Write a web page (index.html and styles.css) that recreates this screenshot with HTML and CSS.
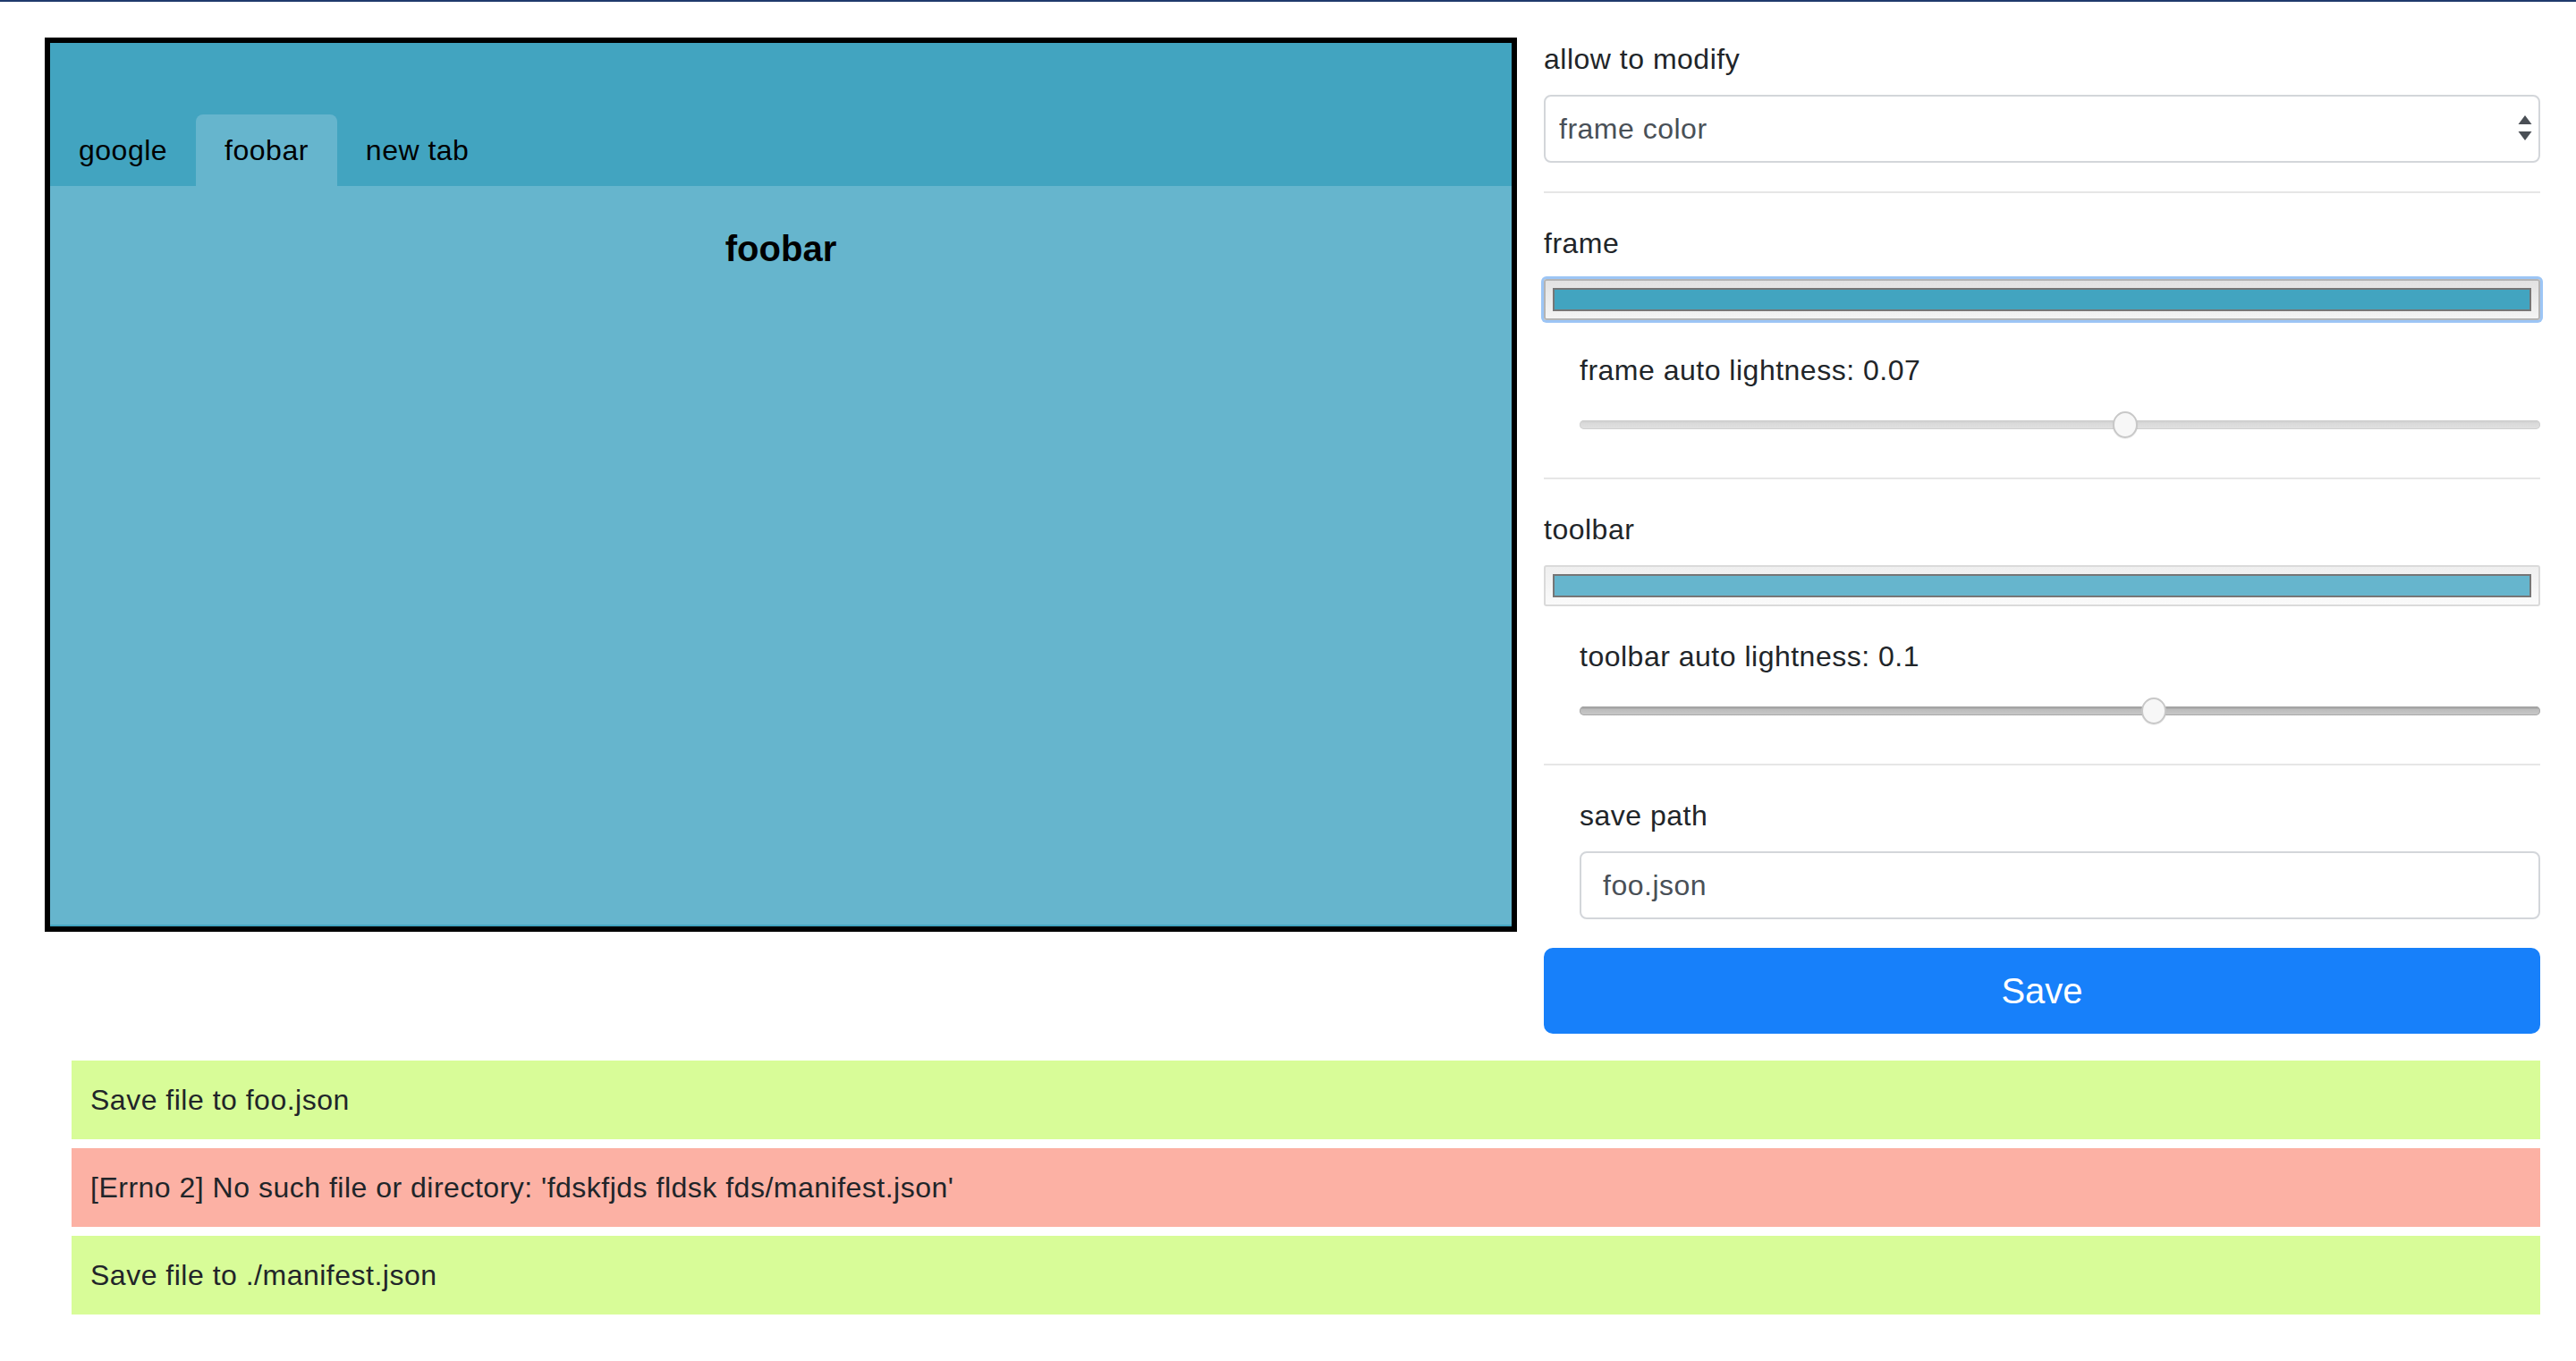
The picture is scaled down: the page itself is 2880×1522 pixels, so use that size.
FILE: index.html
```html
<!DOCTYPE html>
<html lang="en">
<head>
<meta charset="utf-8">
<title>Theme editor</title>
<link rel="stylesheet" href="styles.css">
</head>
<body>
<div class="main">
  <section class="preview">
    <nav class="tabs">
      <span class="tab">google</span>
      <span class="tab active">foobar</span>
      <span class="tab">new tab</span>
    </nav>
    <div class="viewport">
      <h5 class="page-title">foobar</h5>
    </div>
  </section>

  <form class="controls">
    <div class="group">
      <label class="label" for="modify">allow to modify</label>
      <div class="select-wrap">
        <select id="modify" class="select">
          <option>frame color</option>
        </select>
        <svg class="select-arrows" width="16" height="30" viewBox="0 0 16 30" aria-hidden="true">
          <path d="M8 0 L15.5 10 L0.5 10 Z" fill="#4a4f55"/>
          <path d="M0.5 18 L15.5 18 L8 28 Z" fill="#4a4f55"/>
        </svg>
      </div>
    </div>
    <hr class="sep">

    <div class="group">
      <label class="label" for="frame">frame</label>
      <input id="frame" class="color focused" type="color" value="#42a4c0">
    </div>
    <div class="sub slider">
      <label class="label" for="frame-l">frame auto lightness: 0.07</label>
      <input id="frame-l" class="range" type="range" min="-0.5" max="0.5" step="0.01" value="0.07">
    </div>
    <hr class="sep">

    <div class="group">
      <label class="label" for="toolbar">toolbar</label>
      <input id="toolbar" class="color" type="color" value="#66b5cd">
    </div>
    <div class="sub slider">
      <label class="label" for="toolbar-l">toolbar auto lightness: 0.1</label>
      <input id="toolbar-l" class="range dark" type="range" min="-0.5" max="0.5" step="0.01" value="0.1">
    </div>
    <hr class="sep">

    <div class="sub">
      <label class="label" for="path">save path</label>
      <input id="path" class="text" type="text" value="foo.json">
    </div>
    <button type="button" class="save">Save</button>
  </form>
</div>

<div class="messages">
  <div class="msg ok">Save file to foo.json</div>
  <div class="msg err">[Errno 2] No such file or directory: 'fdskfjds fldsk fds/manifest.json'</div>
  <div class="msg ok">Save file to ./manifest.json</div>
</div>
</body>
</html>
```

FILE: styles.css
```css
* { box-sizing: border-box; }

html, body {
  margin: 0;
  background: #ffffff;
}

body {
  border-top: 2px solid #1f3a6c;
  font-family: "Liberation Sans", Arial, sans-serif;
  font-size: 32px;
  line-height: 48px;
  letter-spacing: 0.5px;
  color: #212529;
}

.main {
  display: grid;
  grid-template-columns: 1646px 1114px;
  column-gap: 30px;
  padding: 40px 40px 0 50px;
  align-items: start;
}

/* ---------- preview ---------- */
.preview {
  height: 1000px;
  border: 6px solid #000;
  background: #42a4c0;
  display: flex;
  flex-direction: column;
  padding-bottom: 2px;
}

.tabs {
  display: flex;
  padding-top: 80px;
}

.tab {
  padding: 16px 32px;
  line-height: 48px;
  color: #000;
  border-radius: 8px 8px 0 0;
}

.tab.active {
  background: #66b5cd;
}

.viewport {
  flex: 1;
  background: #66b5cd;
  padding-top: 46px;
}

.page-title {
  margin: 0;
  text-align: center;
  font-size: 40px;
  line-height: 48px;
  font-weight: bold;
  letter-spacing: 0;
  color: #000;
}

/* ---------- controls ---------- */
.controls {
  margin: 0;
}

.label {
  display: block;
  margin-bottom: 16px;
  line-height: 48px;
}

.group {
  margin-bottom: 32px;
}

.sub {
  margin: 0 0 32px 40px;
}

.sub.slider {
  padding-bottom: 6px;
}

.sep {
  margin: 0 0 32px 0;
  border: 0;
  border-top: 2px solid #e6e6e6;
  height: 0;
}

.select-wrap {
  position: relative;
}

.select {
  display: block;
  width: 100%;
  height: 76px;
  -webkit-appearance: none;
  appearance: none;
  border: 2px solid #d3d6da;
  border-radius: 8px;
  background: #fff;
  padding: 0 40px 0 15px;
  font-family: inherit;
  font-size: 32px;
  letter-spacing: 0.5px;
  color: #495057;
}

.select-arrows {
  position: absolute;
  right: 9px;
  top: 23px;
}

.color {
  display: block;
  width: 100%;
  height: 46px;
  -webkit-appearance: none;
  appearance: none;
  padding: 0;
  margin: 0;
  border: 2px solid #dadada;
  border-radius: 3px;
  background: linear-gradient(#efefef, #fafafa);
  cursor: pointer;
}

.color.focused {
  border-color: #b4b4b4;
  background: linear-gradient(#e2e2e2, #f4f4f4);
  box-shadow: 0 0 0 3px #9cc5f5;
}

.color::-webkit-color-swatch-wrapper {
  padding: 8px;
}

.color::-webkit-color-swatch {
  border: 2px solid #767676;
  border-radius: 0;
}

.range {
  display: block;
  width: 100%;
  height: 42px;
  margin: 0;
  padding: 0;
  -webkit-appearance: none;
  appearance: none;
  background: transparent;
}

.range::-webkit-slider-runnable-track {
  height: 10px;
  border-radius: 5px;
  background: linear-gradient(#c9c9c9, #dadada 35%, #e1e1e1);
  box-shadow: inset 0 0 0 1px #d0d0d0;
}

.range.dark::-webkit-slider-runnable-track {
  background: linear-gradient(#8c8c8c, #bdbdbd 35%, #c9c9c9);
  box-shadow: inset 0 0 0 1px #a8a8a8;
}

.range::-webkit-slider-thumb {
  -webkit-appearance: none;
  appearance: none;
  width: 28px;
  height: 30px;
  margin-top: -10px;
  border-radius: 50%;
  background: #f7f7f7;
  border: 2px solid #c8c8c8;
  box-shadow: 0 1px 1px rgba(0, 0, 0, 0.08);
}

.text {
  display: block;
  width: 100%;
  height: 76px;
  border: 2px solid #d3d6da;
  border-radius: 8px;
  padding: 0 24px;
  font-family: inherit;
  font-size: 32px;
  letter-spacing: 0.5px;
  color: #495057;
  background: #fff;
}

.save {
  display: block;
  width: 100%;
  height: 96px;
  border: 0;
  border-radius: 10px;
  background: #1780fa;
  color: #fff;
  font-family: inherit;
  font-size: 40px;
  line-height: 60px;
}

/* ---------- messages ---------- */
.messages {
  margin: 30px 40px 0 80px;
  display: flex;
  flex-direction: column;
  gap: 10px;
}

.msg {
  padding: 20px 21px;
  line-height: 48px;
  font-size: 32px;
  color: #212529;
}

.msg.ok { background: #d8fc98; }
.msg.err { background: #fcb1a4; }
```
